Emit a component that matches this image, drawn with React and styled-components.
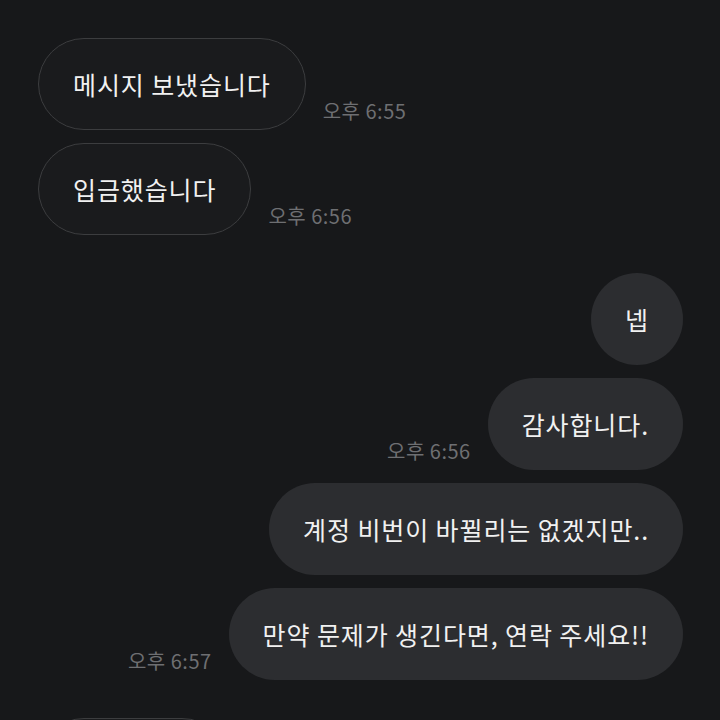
import React from "react";
import styled, { createGlobalStyle } from "styled-components";

const GlobalStyle = createGlobalStyle`
  html, body {
    margin: 0;
    padding: 0;
    background: #17181a;
  }
  body {
    font-family: "Noto Sans CJK KR", "Noto Sans", sans-serif;
  }
`;

const Screen = styled.div`
  width: 720px;
  height: 720px;
  overflow: hidden;
  background: #17181a;
  padding: 38px 37px 0 38px;
  box-sizing: border-box;
  display: flex;
  flex-direction: column;
  gap: 38px;
`;

const Group = styled.div`
  display: flex;
  flex-direction: column;
  gap: 13px;
`;

const Row = styled.div`
  display: flex;
  align-items: flex-end;
  gap: 17px;
  justify-content: ${(p) => (p.$mine ? "flex-end" : "flex-start")};
`;

const Bubble = styled.div`
  box-sizing: border-box;
  height: 92px;
  min-width: 92px;
  padding: 0 34px;
  border-radius: 46px;
  display: flex;
  align-items: center;
  justify-content: center;
  font-size: 25px;
  color: #f1f1f1;
  white-space: nowrap;
  letter-spacing: 0.9px;
  background: ${(p) => (p.$mine ? "#2c2d30" : "#1a1b1d")};
  border: ${(p) => (p.$mine ? "none" : "1.5px solid #3c3d3f")};
`;

const Spacer = styled(Bubble)`
  width: 190px;
`;

const Time = styled.span`
  font-size: 20px;
  letter-spacing: 0.5px;
  color: #6e6f72;
  margin-bottom: 5px;
  white-space: nowrap;
`;

const theirs = [
  { text: "메시지 보냈습니다", time: "오후 6:55" },
  { text: "입금했습니다", time: "오후 6:56" },
];

const mine = [
  { text: "넵" },
  { text: "감사합니다.", time: "오후 6:56" },
  { text: "계정 비번이 바뀔리는 없겠지만.." },
  { text: "만약 문제가 생긴다면, 연락 주세요!!", time: "오후 6:57" },
];

const App = () => {
  return (
    <>
      <GlobalStyle />
      <Screen>
        <Group>
          {theirs.map((m, i) => (
            <Row key={i}>
              <Bubble>{m.text}</Bubble>
              {m.time && <Time>{m.time}</Time>}
            </Row>
          ))}
        </Group>
        <Group>
          {mine.map((m, i) => (
            <Row key={i} $mine>
              {m.time && <Time>{m.time}</Time>}
              <Bubble $mine>{m.text}</Bubble>
            </Row>
          ))}
        </Group>
        <Group>
          <Row>
            <Spacer>&nbsp;</Spacer>
          </Row>
        </Group>
      </Screen>
    </>
  );
};

export default App;
